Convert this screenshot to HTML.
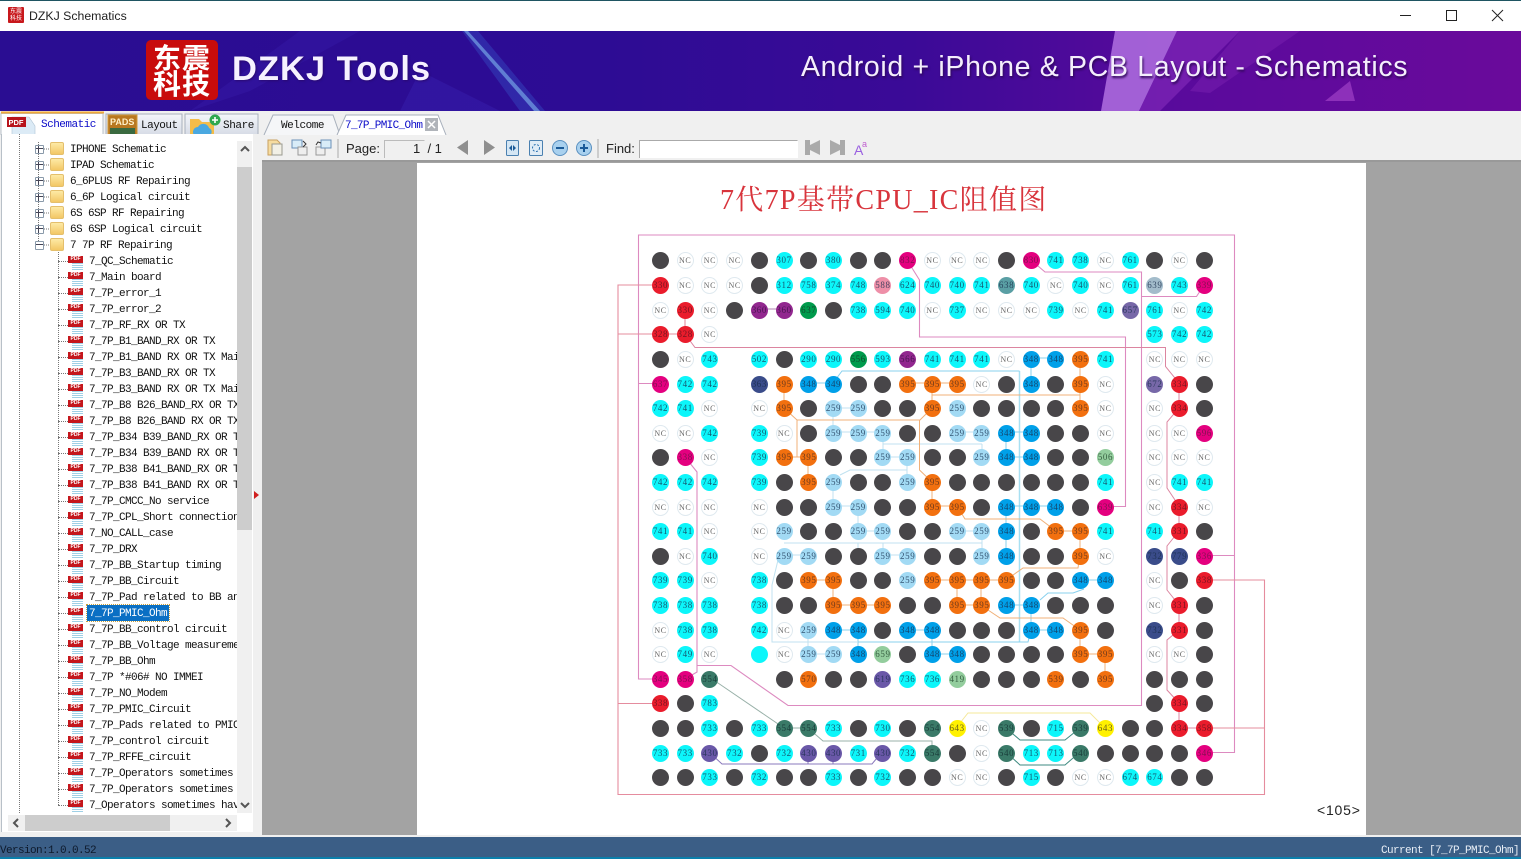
<!DOCTYPE html>
<html><head><meta charset="utf-8"><title>DZKJ Schematics</title>
<style>
html,body{margin:0;padding:0;width:1521px;height:859px;overflow:hidden;background:#f0f0f0;font-family:"Liberation Sans",sans-serif}
.a{position:absolute}
.mono{font-family:"Liberation Mono","Noto Serif CJK SC",monospace;font-size:11px;letter-spacing:-.6px;color:#111;white-space:pre}
#tree{position:absolute;left:0;top:141px;width:237px;height:672px;overflow:hidden}
#tree div{position:relative;height:16px;line-height:19px;white-space:pre;font-family:"Liberation Mono",monospace;font-size:11px;letter-spacing:-.6px;color:#111}
#tree .f{padding-left:70px}
#tree .p{padding-left:89px}
#tree .f::before{content:"";position:absolute;left:50px;top:1px;width:14px;height:13px;background:linear-gradient(#fdeaa6,#f3c765);border:1px solid #e4bf6c;border-radius:2px;box-sizing:border-box}
#tree .f::after{content:"";position:absolute;left:35px;top:4px;width:7px;height:7px;border:1px solid #8a9aaa;background:linear-gradient(90deg,transparent 2px,#445 2px,#445 3px,transparent 3px),linear-gradient(transparent 2px,#445 2px,#445 3px,transparent 3px),#fff;border-radius:1px}
#tree .x::after{background:linear-gradient(transparent 2px,#445 2px,#445 3px,transparent 3px),#fff}
#tree .p::before{content:"PDF";position:absolute;left:68px;top:3px;width:15px;height:15px;background:linear-gradient(#c4161c,#c4161c) 0 0/15px 7px no-repeat,repeating-linear-gradient(#9fd0e6 0 1px,#fff 1px 2px) 4px 7px/11px 8px no-repeat;color:#fff;font:bold 5px/7px "Liberation Sans",sans-serif;letter-spacing:0;text-align:center}
#tree .p::after{content:"";position:absolute;left:58px;top:8px;width:10px;border-top:1px dotted #777}
#sel{position:absolute;left:87px;top:605px;width:82px;height:16px;background:#0a6fc4;color:#fff;font:11px/18px "Liberation Mono",monospace;letter-spacing:-.6px;padding-left:2px;box-sizing:border-box;outline:1px dotted #c8a040;white-space:pre}
#grid{position:absolute;left:648.14px;top:248.69px;display:grid;grid-template-columns:repeat(23,24.73px);grid-auto-rows:24.62px;filter:blur(.3px)}
#grid i,#grid u{display:block;width:17px;height:17px;border-radius:50%;place-self:center;text-align:center;font:normal 9px/17px "Liberation Serif",serif;letter-spacing:.6px;color:rgba(25,45,75,.8);white-space:nowrap;text-decoration:none;overflow:visible}
#grid u{background:none}
.k{background:#484649}
.n{background:#fff;box-shadow:inset 0 0 0 1px #dfe9ef;color:#666!important;font-size:8px!important}
.c{background:#0cf6fa}.r{background:#ea1c2c;color:rgba(90,20,30,.8)!important}.m{background:#e4007f;color:rgba(110,20,70,.85)!important}
.o{background:#f2700f;color:rgba(90,50,30,.85)!important}.b{background:#00a0e9}.l{background:#a2daf4;color:rgba(40,70,100,.9)!important}
.u{background:#92278f;color:rgba(60,20,70,.85)!important}.g{background:#009b4c;color:rgba(20,60,40,.85)!important}.v{background:#6a58a8}
.d{background:#3a7a68;color:rgba(20,50,50,.85)!important}.y{background:#fff100;color:rgba(90,80,30,.9)!important}.w{background:#3a4c8a}
.h{background:#93cd9d;color:rgba(50,90,60,.95)!important}
</style></head>
<body>
<div class="a" style="left:0;top:0;width:1521px;height:31px;background:#fff;border-top:1px solid #1f5562;box-sizing:border-box"></div>
<div class="a" style="left:8px;top:7px;width:16px;height:16px;background:#c8181c;border-radius:1px;color:#fff;font:6px/7px 'Noto Sans CJK SC',sans-serif;text-align:center">东震<br>科技</div>
<div class="a" style="left:29px;top:9px;font-size:12.3px;line-height:15px;color:#222">DZKJ Schematics</div>
<svg class="a" style="left:1395px;top:8px" width="120" height="16" fill="none" stroke="#222" stroke-width="1"><path d="M5 7.5h11"/><rect x="51.5" y="2.5" width="10" height="10"/><path d="M97 2l11 11M108 2L97 13"/></svg>

<!-- banner -->
<div class="a" style="left:0;top:31px;width:1521px;height:80px;overflow:hidden;background:linear-gradient(90deg,#2a0d92 0,#2d0c94 40%,#3b0a97 60%,#5a0a9c 78%,#6a0a9b 100%)">
<svg width="1521" height="80" style="position:absolute;left:0;top:0">
<polygon points="300,0 360,0 250,60 190,80" fill="#3a1fb0" opacity=".35"/>
<polygon points="462,0 478,0 545,80 520,80" fill="#3a5fd0" opacity=".35"/>
<polygon points="464,0 468,0 540,80 534,80" fill="#80b8f0" opacity=".6"/>
<polygon points="420,40 500,80 400,80" fill="#3e2cc0" opacity=".3"/>
<polygon points="1115,0 1177,0 1139,80 1101,80" fill="#b070e0" opacity=".85"/>
<polygon points="1177,0 1240,0 1160,80 1139,80" fill="#8a30c0" opacity=".55"/>
<polygon points="1240,0 1300,0 1210,62 1190,60" fill="#7a20b0" opacity=".5"/>
<polygon points="1325,70 1350,50 1355,70" fill="#a040c8" opacity=".7"/>
</svg>
<div class="a" style="left:146px;top:9px;width:72px;height:60px;background:#c80c0c;border-radius:5px;color:#fff;font:bold 28px/26px 'Noto Sans CJK SC',sans-serif;text-align:center;letter-spacing:1px;overflow:hidden;white-space:nowrap;padding-top:4px;box-sizing:border-box">东震<br>科技</div>
<div class="a" style="left:232px;top:17px;font:bold 34.5px/42px 'Liberation Sans',sans-serif;color:#f6f2ff;letter-spacing:1px;white-space:nowrap;text-shadow:1px 1px 2px #2a0a70">DZKJ Tools</div>
<div class="a" style="left:801px;top:17px;font:28.5px/38px 'Liberation Sans',sans-serif;color:#f4eefc;letter-spacing:.67px;white-space:nowrap;text-shadow:1px 2px 2px #30085a">Android + iPhone &amp; PCB Layout - Schematics</div>
</div>

<!-- tab strip -->
<div class="a" style="left:0;top:111px;width:1521px;height:24px;background:#f0f0f0"></div>
<svg class="a" style="left:0;top:111px" width="470" height="26">
<defs><linearGradient id="t" x1="0" y1="0" x2="0" y2="1"><stop offset="0" stop-color="#f4f6fa"/><stop offset="1" stop-color="#d6dbe6"/></linearGradient></defs>
<path d="M1 24V2.5h102v21.5" fill="#fff" stroke="#b8c0c8"/><path d="M1 1.5h103" stroke="#f0a838" stroke-width="2"/>
<path d="M106 24V3h76v21z" fill="url(#t)" stroke="#a8b0bc"/>
<path d="M185 24V3h73v21z" fill="url(#t)" stroke="#a8b0bc"/>
<path d="M264 24l9-20h60l7 20" fill="#f5f6f8" stroke="#a8b0bc"/>
<path d="M337 24l9-20h92l8 20" fill="#fff" stroke="#a8b0bc"/>
<path d="M12 6h17l6 9v9H12z" fill="#dcebf6" stroke="#b0c4d4" stroke-width=".6"/>
<rect x="7" y="6" width="19" height="10" fill="#b8141c"/>
<text x="8.500" y="14" font-size="7.500" font-weight="bold" fill="#fff" font-family="Liberation Sans">PDF</text>
<rect x="108" y="4" width="29" height="20" fill="#b87820" stroke="#d09838"/><rect x="110" y="17" width="25" height="7" fill="#3a6a40"/>
<text x="110" y="14" font-size="9" font-weight="bold" fill="#fff0c8" font-family="Liberation Sans">PADS</text>
<path d="M190 24V8h9l3 3h12v13z" fill="#f4bc48"/><path d="M194 24a5 5 0 0 1 4-8 6 6 0 0 1 11 1 4 4 0 0 1 1 7z" fill="#4aa8e0"/>
<circle cx="215" cy="9" r="5.500" fill="#2fa84f"/><path d="M212 9h6M215 6v6" stroke="#fff" stroke-width="1.600"/>
<rect x="425" y="7" width="13" height="13" fill="#b0b4ba"/><path d="M428 10l7 7M435 10l-7 7" stroke="#fff" stroke-width="1.500"/>
</svg>
<div class="a mono" style="left:41px;top:118px;color:#0a0ac8;letter-spacing:-.5px;line-height:14px">Schematic</div>
<div class="a mono" style="left:141px;top:119px;line-height:14px;letter-spacing:-.5px">Layout</div>
<div class="a mono" style="left:223px;top:119px;line-height:14px;letter-spacing:-.4px">Share</div>
<div class="a mono" style="left:281px;top:119px;line-height:14px;letter-spacing:-.45px">Welcome</div>
<div class="a mono" style="left:345px;top:119px;line-height:14px;letter-spacing:-.65px;color:#0a0ac8">7_7P_PMIC_Ohm</div>

<!-- left panel -->
<div class="a" style="left:1px;top:134px;width:252px;height:698px;background:#fff;border-left:1px solid #b8c0c8;box-sizing:border-box"></div>
<div class="a" style="left:253px;top:134px;width:9px;height:701px;background:#f0f0f0"></div>
<div class="a" style="left:254px;top:491px;width:0;height:0;border-left:5px solid #d02020;border-top:4px solid transparent;border-bottom:4px solid transparent"></div>
<svg class="a" style="left:0;top:134px" width="80" height="690" fill="none" stroke="#777" stroke-dasharray="1 1"><path d="M19.500 0v680M38.500 8v105M58.500 112v560M42 15h8M42 31h8M42 47h8M42 63h8M42 79h8M42 95h8M42 111h8"/></svg>
<div id="tree">
<div class="f">IPHONE Schematic</div><div class="f">IPAD Schematic</div><div class="f">6_6PLUS RF Repairing</div><div class="f">6_6P Logical circuit</div><div class="f">6S 6SP RF Repairing</div><div class="f">6S 6SP Logical circuit</div><div class="f x">7 7P RF Repairing</div>
<div class="p">7_QC_Schematic</div><div class="p">7_Main board</div><div class="p">7_7P_error_1</div><div class="p">7_7P_error_2</div><div class="p">7_7P_RF_RX OR TX</div><div class="p">7_7P_B1_BAND_RX OR TX</div><div class="p">7_7P_B1_BAND RX OR TX Main</div><div class="p">7_7P_B3_BAND_RX OR TX</div><div class="p">7_7P_B3_BAND RX OR TX Main</div><div class="p">7_7P_B8 B26_BAND_RX OR TX</div><div class="p">7_7P_B8 B26_BAND RX OR TX</div><div class="p">7_7P_B34 B39_BAND_RX OR TX</div><div class="p">7_7P_B34 B39_BAND RX OR TX</div><div class="p">7_7P_B38 B41_BAND_RX OR TX</div><div class="p">7_7P_B38 B41_BAND RX OR TX</div><div class="p">7_7P_CMCC_No service</div><div class="p">7_7P_CPL_Short connection</div><div class="p">7_NO_CALL_case</div><div class="p">7_7P_DRX</div><div class="p">7_7P_BB_Startup timing</div><div class="p">7_7P_BB_Circuit</div><div class="p">7_7P_Pad related to BB and</div><div class="p"></div><div class="p">7_7P_BB_control circuit</div><div class="p">7_7P_BB_Voltage measurement</div><div class="p">7_7P_BB_Ohm</div><div class="p">7_7P *#06# NO IMMEI</div><div class="p">7_7P_NO_Modem</div><div class="p">7_7P_PMIC_Circuit</div><div class="p">7_7P_Pads related to PMIC</div><div class="p">7_7P_control circuit</div><div class="p">7_7P_RFFE_circuit</div><div class="p">7_7P_Operators sometimes</div><div class="p">7_7P_Operators sometimes</div><div class="p">7_Operators sometimes have</div>
</div>
<div id="sel">7_7P_PMIC_Ohm</div>
<div class="a" style="left:237px;top:141px;width:15px;height:672px;background:#f0f0f0"></div>
<div class="a" style="left:237px;top:167px;width:15px;height:363px;background:#cdcdcd"></div>
<svg class="a" style="left:238px;top:144px" width="14" height="10" fill="none" stroke="#555" stroke-width="2"><path d="M3 7l4-4 4 4"/></svg>
<svg class="a" style="left:238px;top:800px" width="14" height="10" fill="none" stroke="#555" stroke-width="2"><path d="M3 3l4 4 4-4"/></svg>
<div class="a" style="left:8px;top:815px;width:229px;height:16px;background:#f0f0f0"></div>
<div class="a" style="left:25px;top:815px;width:145px;height:16px;background:#cdcdcd"></div>
<svg class="a" style="left:10px;top:817px" width="224" height="12" fill="none" stroke="#555" stroke-width="2"><path d="M8 2L4 6l4 4M216 2l4 4-4 4"/></svg>

<!-- toolbar -->
<div class="a" style="left:262px;top:135px;width:1259px;height:25px;background:#f0f0f0"></div>
<svg class="a" style="left:262px;top:135px" width="620" height="26">
<path d="M6 5h9l3 3v12H6z" fill="#f6dca0" stroke="#c8a060"/><path d="M10 9h10v11H10z" fill="#f2f0e6" stroke="#9a9a90"/>
<path d="M30 5h10v8H30z" fill="#d8ecf8" stroke="#6a90b8"/><path d="M36 12h9v8h-9z" fill="#eee" stroke="#999"/><path d="M41 6l3 3-3 3" stroke="#333" fill="none"/>
<path d="M54 12h9v8h-9z" fill="#eee" stroke="#999"/><path d="M59 5h10v8H59z" fill="#d8ecf8" stroke="#6a90b8"/><path d="M54 10l2-3 3 1" stroke="#333" fill="none"/>
<path d="M76 4v19" stroke="#aaa"/>
<path d="M122.500 23V5.500h40" stroke="#bbb" fill="none"/>
<path d="M206 5v15l-11-7.500z" fill="#8f8f8f"/><path d="M222 5v15l11-7.500z" fill="#8f8f8f"/>
<rect x="244.500" y="5.500" width="12" height="15" rx="1" fill="#d4e6f4" stroke="#4a80b0"/><path d="M247 13l3-3v6zM254 13l-3-3v6z" fill="#1a5a98"/>
<rect x="267.500" y="5.500" width="13" height="15" rx="1" fill="#e0ecf6" stroke="#4a80b0"/><circle cx="274" cy="13" r="3.500" fill="none" stroke="#2a70b0" stroke-dasharray="2 1.500"/>
<circle cx="298" cy="13" r="7.500" fill="#a8d0ee" stroke="#5a90c0"/><path d="M294 13h8" stroke="#1a5a98" stroke-width="2"/>
<circle cx="322" cy="13" r="7.500" fill="#a8d0ee" stroke="#5a90c0"/><path d="M318 13h8M322 9v8" stroke="#1a5a98" stroke-width="2"/>
<path d="M336 4v19" stroke="#aaa"/>
<path d="M377.500 23V5.500h158" stroke="#aaa" fill="none"/><rect x="378" y="6" width="158" height="17" fill="#fff"/>
<path d="M543 5h5v5l10-5v15l-10-5v5h-5z" fill="#aaa"/><path d="M568 5l10 5V5h5v15h-5v-5l-10 5z" fill="#aaa"/>
<text x="592" y="20" font-size="14" fill="#9a60e0" font-family="Liberation Sans">A</text><text x="600" y="12" font-size="9" fill="#c060d0" font-family="Liberation Sans">a</text>
</svg>
<div class="a" style="left:346px;top:141px;font-size:13px;line-height:16px;color:#222">Page:</div>
<div class="a" style="left:413px;top:141px;font-size:13px;line-height:16px;color:#222;white-space:pre">1  / 1</div>
<div class="a" style="left:606px;top:141px;font-size:13px;line-height:16px;color:#222">Find:</div>

<!-- doc area -->
<div class="a" style="left:262px;top:160px;width:1259px;height:675px;background:#a3a3a3;border-top:2px solid #999;box-sizing:border-box"></div>
<div class="a" style="left:417px;top:163px;width:949px;height:672px;background:#fff"></div>
<div class="a" style="left:720px;top:182px;font:28px/38px 'Liberation Serif','Noto Serif CJK SC',serif;color:#d8343c;letter-spacing:1.3px;white-space:nowrap">7代7P基带CPU_IC阻值图</div>
<div class="a" style="left:1317px;top:802px;font-size:14px;line-height:16px;color:#222;white-space:nowrap;letter-spacing:.8px">&lt;105&gt;</div>

<svg class="a" style="left:0;top:0;filter:blur(.2px)" width="1521" height="859" fill="none">
<g stroke="#dd8ac0" stroke-width="1.100">
<path d="M660 679H638.500V235H1234.500V752.500H1204"/>
<path d="M660 383.500H638.500"/>
<path d="M1204 555.500H1234.500"/>
<path d="M907 260L919.500 280V337H1125.500V506.500H1105"/>
<path d="M1031 260L1045 272H1141.500V705.500H788L731 665.500H697V472L685 457M697 665.500V672L685 679"/>
<path d="M1141.500 296.500H1196.500L1204 285"/>
</g>
<g stroke="#e58c9e" stroke-width="1.100">
<path d="M660 285H618V794.500H1264.500V580H1204"/>
<path d="M618 334H685M618 703.500H660M1204 728H1264.500"/>
<path d="M685 309V334"/>
</g>
<g stroke="#dc85a0" stroke-width="1">
<path d="M685 334L695 347.500H1165.500V366.500L1179 383V408L1167 422V488L1179 506V531L1167 546V590L1179 605V630L1167 640V690L1179 703V728H1204"/>
</g>
<path d="M758 309H783" stroke="#b080b0"/>
<g stroke="#a8e0f2" stroke-width="1.500"><path d="M1019.500 371V642"/></g>
<g stroke="#88d0ee" stroke-width="1">
<path d="M833 383L842 371H1019.500"/>
<path d="M858 642H1028L1031 630"/>
<path d="M808 383H833M1031 358H1056M1031 358V383M1006 432H1031M1006 457H1031M1006 432V457M1006 506H1056M1006 506V555M1081 580H1105M1006 605H1031M1031 605V630M1031 630H1056M833 630H858M858 630V654M907 630H932M932 630V654H957"/>
<path d="M1040 600L1048 593H1073L1084 589"/>
</g>
<g stroke="#c0e2f0" stroke-width="1">
<path d="M833 408H858M833 408V432M833 432H883M883 432V457H907M907 457V482M840 475L850 470H907"/>
<path d="M883 444H982M982 432H957M982 444V457"/>
<path d="M833 482V506H858V531H883M957 531H982M784 543H982M858 543V555M883 543V555M982 531V555"/>
<path d="M784 555H808M883 555H907M778 560L772 585V642H858M808 630V654H833"/>
</g>
<g stroke="#f0b078" stroke-width="1">
<path d="M784 383V408L797 420H920L932 408V383M907 383H957M932 395H1080M1080 358V408"/>
<path d="M797 420V457M784 457H808V482M919.500 420V470L932 482V506H957L965 519H1040L1056 531H1080V555L1078 568H1023L1006 580"/>
<path d="M932 580H1006M808 580H833V605H883M957 580V605M981 580V605M957 605H981M988 610L1000 618H1063L1080 630V654H1105V679"/>
</g>
<g stroke="#98b0a8" stroke-width="1"><path d="M710 679L718 683L784 728H808L823 741H932V752"/></g>
<g stroke="#8a78bc" stroke-width="1"><path d="M709 752L722 764H872L882 752M808 752V764M833 752V764"/></g>
<g stroke="#f5e89a" stroke-width="1"><path d="M956 728L968 713H1090L1105 728"/></g>
<g stroke="#3e8a80" stroke-width="1"><path d="M1006 728L1020 740H1065L1080 728M1006 752L1020 765H1065L1080 752"/></g>
</svg>

<div id="grid">
<i class=k></i><i class=n>NC</i><i class=n>NC</i><i class=n>NC</i><i class=k></i><i class=c>307</i><i class=k></i><i class=c>380</i><i class=k></i><i class=k></i><i class=m>832</i><i class=n>NC</i><i class=n>NC</i><i class=n>NC</i><i class=k></i><i class=m>830</i><i class=c>741</i><i class=c>738</i><i class=n>NC</i><i class=c>761</i><i class=k></i><i class=n>NC</i><i class=k></i>
<i class=r>330</i><i class=n>NC</i><i class=n>NC</i><i class=n>NC</i><i class=k></i><i class=c>312</i><i class=c>758</i><i class=c>374</i><i class=c>748</i><i style="background:#ee8fa8">588</i><i class=c>624</i><i class=c>740</i><i class=c>740</i><i class=c>741</i><i style="background:#5a9fa4">638</i><i class=c>740</i><i class=n>NC</i><i class=c>740</i><i class=n>NC</i><i class=c>761</i><i style="background:#a3bccb">639</i><i class=c>743</i><i class=m>339</i>
<i class=n>NC</i><i class=r>330</i><i class=n>NC</i><i class=k></i><i class=u>360</i><i class=u>360</i><i class=g>637</i><i class=k></i><i class=c>738</i><i class=c>594</i><i class=c>740</i><i class=n>NC</i><i class=c>737</i><i class=n>NC</i><i class=n>NC</i><i class=n>NC</i><i class=c>739</i><i class=n>NC</i><i class=c>741</i><i class=v style="background:#7768a8">657</i><i class=c>761</i><i class=n>NC</i><i class=c>742</i>
<i class=r>328</i><i class=r>328</i><i class=n>NC</i><u></u><u></u><u></u><u></u><u></u><u></u><u></u><u></u><u></u><u></u><u></u><u></u><u></u><u></u><u></u><u></u><u></u><i class=c>573</i><i class=c>742</i><i class=c>742</i>
<i class=k></i><i class=n>NC</i><i class=c>743</i><u></u><i class=c>502</i><i class=k></i><i class=c>290</i><i class=c>290</i><i class=g>556</i><i class=c>593</i><i class=u>566</i><i class=c>741</i><i class=c>741</i><i class=c>741</i><i class=n>NC</i><i class=b>348</i><i class=b>348</i><i class=o>395</i><i class=c>741</i><u></u><i class=n>NC</i><i class=n>NC</i><i class=n>NC</i>
<i class=m>637</i><i class=c>742</i><i class=c>742</i><u></u><i class=w>363</i><i class=o>395</i><i class=b>348</i><i class=b>349</i><i class=k></i><i class=k></i><i class=o>395</i><i class=o>395</i><i class=o>395</i><i class=n>NC</i><i class=k></i><i class=b>348</i><i class=k></i><i class=o>395</i><i class=n>NC</i><u></u><i class=v style="background:#7768a8">672</i><i class=r>334</i><i class=k></i>
<i class=c>742</i><i class=c>741</i><i class=n>NC</i><u></u><i class=n>NC</i><i class=o>395</i><i class=k></i><i class=l>259</i><i class=l>259</i><i class=k></i><i class=k></i><i class=o>395</i><i class=l>259</i><i class=k></i><i class=k></i><i class=k></i><i class=k></i><i class=o>395</i><i class=n>NC</i><u></u><i class=n>NC</i><i class=r>334</i><i class=k></i>
<i class=n>NC</i><i class=n>NC</i><i class=c>742</i><u></u><i class=c>739</i><i class=n>NC</i><i class=k></i><i class=l>259</i><i class=l>259</i><i class=l>259</i><i class=k></i><i class=k></i><i class=l>259</i><i class=l>259</i><i class=b>348</i><i class=b>348</i><i class=k></i><i class=k></i><i class=n>NC</i><u></u><i class=n>NC</i><i class=n>NC</i><i class=m>596</i>
<i class=k></i><i class=m>338</i><i class=n>NC</i><u></u><i class=c>739</i><i class=o>395</i><i class=o>395</i><i class=k></i><i class=k></i><i class=l>259</i><i class=l>259</i><i class=k></i><i class=k></i><i class=l>259</i><i class=b>348</i><i class=b>348</i><i class=k></i><i class=k></i><i class=h>506</i><u></u><i class=n>NC</i><i class=n>NC</i><i class=n>NC</i>
<i class=c>742</i><i class=c>742</i><i class=c>742</i><u></u><i class=c>739</i><i class=k></i><i class=o>395</i><i class=l>259</i><i class=k></i><i class=k></i><i class=l>259</i><i class=o>395</i><i class=k></i><i class=k></i><i class=k></i><i class=k></i><i class=k></i><i class=k></i><i class=c>741</i><u></u><i class=n>NC</i><i class=c>741</i><i class=c>741</i>
<i class=n>NC</i><i class=n>NC</i><i class=n>NC</i><u></u><i class=n>NC</i><i class=k></i><i class=k></i><i class=l>259</i><i class=l>259</i><i class=k></i><i class=k></i><i class=o>395</i><i class=o>395</i><i class=k></i><i class=b>348</i><i class=b>348</i><i class=b>348</i><i class=k></i><i class=m>639</i><u></u><i class=n>NC</i><i class=r>334</i><i class=n>NC</i>
<i class=c>741</i><i class=c>741</i><i class=n>NC</i><u></u><i class=n>NC</i><i class=l>259</i><i class=k></i><i class=k></i><i class=l>259</i><i class=l>259</i><i class=k></i><i class=k></i><i class=l>259</i><i class=l>259</i><i class=b>348</i><i class=k></i><i class=o>395</i><i class=o>395</i><i class=c>741</i><u></u><i class=c>741</i><i class=r>331</i><i class=k></i>
<i class=k></i><i class=n>NC</i><i class=c>740</i><u></u><i class=n>NC</i><i class=l>259</i><i class=l>259</i><i class=k></i><i class=k></i><i class=l>259</i><i class=l>259</i><i class=k></i><i class=k></i><i class=l>259</i><i class=b>348</i><i class=k></i><i class=k></i><i class=o>395</i><i class=n>NC</i><u></u><i class=w>732</i><i class=w>779</i><i class=m>336</i>
<i class=c>739</i><i class=c>739</i><i class=n>NC</i><u></u><i class=c>738</i><i class=k></i><i class=o>395</i><i class=o>395</i><i class=k></i><i class=k></i><i class=l>259</i><i class=o>395</i><i class=o>395</i><i class=o>395</i><i class=o>395</i><i class=k></i><i class=k></i><i class=b>348</i><i class=b>348</i><u></u><i class=n>NC</i><i class=k></i><i class=r>338</i>
<i class=c>738</i><i class=c>738</i><i class=c>738</i><u></u><i class=c>738</i><i class=k></i><i class=k></i><i class=o>395</i><i class=o>395</i><i class=o>395</i><i class=k></i><i class=k></i><i class=o>395</i><i class=o>395</i><i class=b>348</i><i class=b>348</i><i class=k></i><i class=k></i><i class=k></i><u></u><i class=n>NC</i><i class=r>331</i><i class=k></i>
<i class=n>NC</i><i class=c>738</i><i class=c>738</i><u></u><i class=c>742</i><i class=n>NC</i><i class=l>259</i><i class=b>348</i><i class=b>348</i><i class=k></i><i class=b>348</i><i class=b>348</i><i class=k></i><i class=k></i><i class=k></i><i class=b>348</i><i class=b>348</i><i class=o>395</i><i class=k></i><u></u><i class=w>732</i><i class=r>331</i><i class=k></i>
<i class=n>NC</i><i class=c>749</i><i class=n>NC</i><u></u><i class=c></i><i class=n>NC</i><i class=l>259</i><i class=l>259</i><i class=b>348</i><i class=h>659</i><i class=k></i><i class=b>348</i><i class=b>348</i><i class=k></i><i class=k></i><i class=k></i><i class=k></i><i class=o>395</i><i class=o>395</i><u></u><i class=n>NC</i><i class=n>NC</i><i class=k></i>
<i class=m>345</i><i class=m>358</i><i class=d>554</i><u></u><u></u><i class=k></i><i class=o>570</i><i class=k></i><i class=k></i><i class=v>619</i><i class=c>736</i><i class=c>736</i><i class=h>419</i><i class=k></i><i class=k></i><i class=k></i><i class=o>539</i><i class=k></i><i class=o>395</i><u></u><i class=k></i><i class=k></i><i class=k></i>
<i class=r>338</i><i class=k></i><i class=c>783</i><u></u><u></u><u></u><u></u><u></u><u></u><u></u><u></u><u></u><u></u><u></u><u></u><u></u><u></u><u></u><u></u><u></u><i class=k></i><i class=r>334</i><i class=k></i>
<i class=k></i><i class=k></i><i class=c>733</i><i class=k></i><i class=c>733</i><i class=d>554</i><i class=d>554</i><i class=c>733</i><i class=k></i><i class=c>730</i><i class=k></i><i class=d>554</i><i class=y>643</i><i class=n>NC</i><i class=d>539</i><i class=k></i><i class=c>715</i><i class=d>539</i><i class=y>643</i><i class=k></i><i class=k></i><i class=r>334</i><i class=r>358</i>
<i class=c>733</i><i class=c>733</i><i class=v>430</i><i class=c>732</i><i class=k></i><i class=c>732</i><i class=v>430</i><i class=v>430</i><i class=c>731</i><i class=v>430</i><i class=c>732</i><i class=d>554</i><i class=k></i><i class=n>NC</i><i class=d>540</i><i class=c>713</i><i class=c>713</i><i class=d>540</i><i class=k></i><i class=k></i><i class=k></i><i class=k></i><i class=m>346</i>
<i class=k></i><i class=k></i><i class=c>733</i><i class=k></i><i class=c>732</i><i class=k></i><i class=k></i><i class=c>733</i><i class=k></i><i class=c>732</i><i class=k></i><i class=k></i><i class=n>NC</i><i class=n>NC</i><i class=k></i><i class=c>715</i><i class=k></i><i class=n>NC</i><i class=n>NC</i><i class=c>674</i><i class=c>674</i><i class=k></i><i class=k></i>
</div>

<!-- status bar -->
<div class="a" style="left:0;top:837px;width:1521px;height:20px;background:#3b5e86"></div>
<div class="a" style="left:0;top:857px;width:1521px;height:2px;background:#0b7fab"></div>
<div class="a mono" style="left:0;top:844px;line-height:14px;color:#0e1a2c">Version:1.0.0.52</div>
<div class="a mono" style="left:1381px;top:844px;line-height:14px;color:#e8eef6">Current [7_7P_PMIC_Ohm]</div>
</body></html>
